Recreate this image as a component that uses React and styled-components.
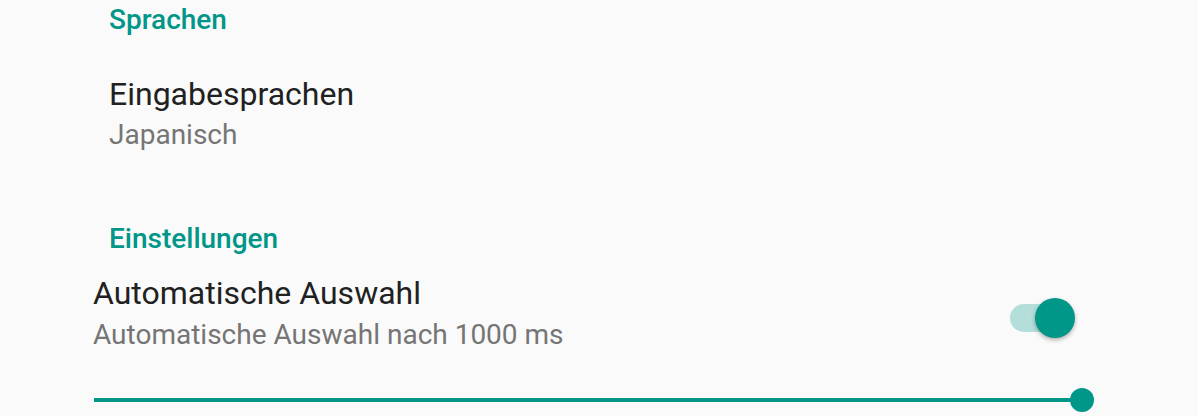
import React, { useState } from 'react'
import styled, { createGlobalStyle } from 'styled-components'

const teal = '#009688'

const GlobalStyle = createGlobalStyle`
    html, body {
        margin: 0;
        padding: 0;
        background: #fafafa;
        font-family: Roboto, "Noto Sans", sans-serif;
    }
`

const Page = styled.div`
    width: 1198px;
    height: 416px;
    overflow: hidden;
    background: #fafafa;
    box-sizing: border-box;
    padding: 4px 104px 0 93px;
    display: flex;
    flex-direction: column;
`

const SectionHeader = styled.div`
    font-size: 28px;
    line-height: 32px;
    font-weight: 500;
    color: ${teal};
    padding-left: 16px;
    margin-top: ${props => props.top || 0}px;
`

const Pref = styled.div`
    display: flex;
    align-items: flex-start;
    padding-left: ${props => props.indent || 0}px;
    margin-top: ${props => props.top || 0}px;
`

const PrefText = styled.div`
    flex: 1;
    display: flex;
    flex-direction: column;
`

const Title = styled.div`
    font-size: 32px;
    line-height: 40px;
    color: #212121;
`

const Summary = styled.div`
    font-size: 28px;
    line-height: 36px;
    color: #757575;
    margin-top: ${props => props.top || 0}px;
`

const Switch = styled.div`
    position: relative;
    width: 65px;
    height: 40px;
    margin: 25px 19px 0 0;
    cursor: pointer;
    > .track {
        position: absolute;
        left: 0;
        top: 6px;
        width: 56px;
        height: 28px;
        border-radius: 14px;
        background: ${props => props.on ? 'rgba(0,150,136,0.28)' : 'rgba(0,0,0,0.26)'};
    }
    > .thumb {
        position: absolute;
        top: 0;
        left: ${props => props.on ? 25 : 0}px;
        width: 40px;
        height: 40px;
        border-radius: 50%;
        background: ${props => props.on ? teal : '#f1f1f1'};
        box-shadow: 0 2px 4px rgba(0,0,0,0.3);
    }
`

const Slider = styled.div`
    position: relative;
    height: 24px;
    margin: 35px 0 0 1px;
    display: flex;
    align-items: center;
    > .line {
        flex: 1;
        height: 4px;
        background: ${teal};
        margin-right: 12px;
    }
    > .knob {
        position: absolute;
        right: 0;
        top: 0;
        width: 24px;
        height: 24px;
        border-radius: 50%;
        background: ${teal};
    }
`

const App = () => {
    const [auto, setAuto] = useState(true)

    return (
        <Page>
            <GlobalStyle />
            <SectionHeader>Sprachen</SectionHeader>
            <Pref indent={16} top={38}>
                <PrefText>
                    <Title>Eingabesprachen</Title>
                    <Summary top={3}>Japanisch</Summary>
                </PrefText>
            </Pref>

            <SectionHeader top={70}>Einstellungen</SectionHeader>
            <Pref top={18}>
                <PrefText>
                    <Title>Automatische Auswahl</Title>
                    <Summary top={4}>Automatische Auswahl nach 1000 ms</Summary>
                </PrefText>
                <Switch on={auto} onClick={() => setAuto(!auto)}>
                    <div className='track' />
                    <div className='thumb' />
                </Switch>
            </Pref>
            <Slider>
                <div className='line' />
                <div className='knob' />
            </Slider>
        </Page>
    )
}

export default App
